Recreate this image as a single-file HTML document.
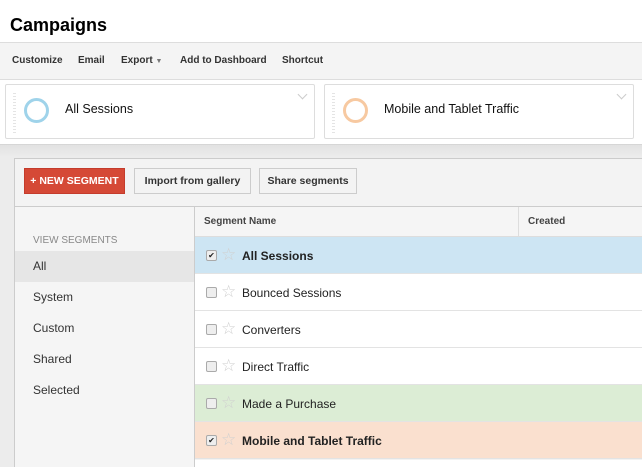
<!DOCTYPE html><html><head><style>
*{box-sizing:border-box;margin:0;padding:0}
body{width:642px;height:467px;overflow:hidden;background:#fff;font-family:"Liberation Sans",sans-serif;position:relative;color:#222}
.a{position:absolute}
.tb span{position:absolute;top:12px;font-size:10px;font-weight:bold;color:#333}
.card{position:absolute;top:84px;height:55px;background:#fff;border:1px solid #ddd;border-radius:2px}
.dots{position:absolute;left:7px;top:8px;width:3px;height:40px;background:repeating-linear-gradient(#e4e4e4 0 1px,#fff 1px 3px)}
.ring{position:absolute;left:18px;top:13px;width:25px;height:25px;border-radius:50%;border:3px solid}
.card .t{position:absolute;left:59px;top:17px;font-size:12.5px;color:#111}
.chev{position:absolute;right:8px;top:6px;width:7px;height:7px;border-right:1px solid #ccc;border-bottom:1px solid #ccc;transform:rotate(45deg)}
.btn{position:absolute;top:168px;height:26px;border:1px solid #ccc;background:#f3f3f3;font-size:10.5px;font-weight:bold;color:#333;line-height:24px;text-align:center}
.nav{position:absolute;left:33px;font-size:12px;color:#333}
.row{position:absolute;left:195px;width:447px;height:37px;border-bottom:1px solid #e3e3e3;font-size:12px;color:#222}
.row .cb{position:absolute;left:11px;top:13px;width:11px;height:11px;border:1px solid #aaa;border-radius:2px;background:#eee;font-size:8px;line-height:9px;text-align:center}
.row .st{position:absolute;left:26px;top:10px;font-size:17px;color:#d0d0d0;line-height:16px}
.row .n{position:absolute;left:47px;top:12px}
</style></head><body>
<div class="a" style="left:10px;top:15px;font-size:18px;font-weight:bold;color:#000">Campaigns</div>
<div class="a tb" style="left:0;top:42px;width:642px;height:38px;background:#f4f4f4;border-top:1px solid #ddd;border-bottom:1px solid #ddd">
<span style="left:12px">Customize</span><span style="left:78px">Email</span><span style="left:121px">Export <span style="position:static;font-size:7px;color:#777">▼</span></span><span style="left:180px">Add to Dashboard</span><span style="left:282px">Shortcut</span></div>
<div class="card" style="left:5px;width:310px"><div class="dots"></div><div class="ring" style="border-color:#9fd3ea"></div><div class="t">All Sessions</div><div class="chev"></div></div>
<div class="card" style="left:324px;width:310px"><div class="dots"></div><div class="ring" style="border-color:#f7c9a1"></div><div class="t">Mobile and Tablet Traffic</div><div class="chev"></div></div>
<div class="a" style="left:0;top:144px;width:642px;height:323px;background:linear-gradient(#e2e2e2,#ececec 12px,#ececec);border-top:1px solid #d6d6d6"></div>
<div class="a" style="left:14px;top:158px;width:628px;height:309px;background:#f3f3f3;border:1px solid #ccc;border-right:none"></div>
<div class="btn" style="left:24px;width:101px;background:#d54936;border-color:#c43c2c;color:#fff">+ NEW SEGMENT</div>
<div class="btn" style="left:134px;width:117px">Import from gallery</div>
<div class="btn" style="left:259px;width:98px">Share segments</div>
<div class="a" style="left:15px;top:206px;width:627px;height:1px;background:#ccc"></div>
<div class="a" style="left:15px;top:207px;width:180px;height:260px;background:#f5f5f5"></div>
<div class="a" style="left:194px;top:207px;width:1px;height:260px;background:#ccc"></div>
<div class="a" style="left:195px;top:207px;width:447px;height:30px;background:#f5f5f5;border-bottom:1px solid #ddd;font-size:10px;font-weight:bold;color:#444"><span style="position:absolute;left:9px;top:9px">Segment Name</span><span style="position:absolute;left:323px;top:0;width:1px;height:29px;background:#ddd"></span><span style="position:absolute;left:333px;top:9px">Created</span></div>
<div class="a" style="left:33px;top:235px;font-size:10px;color:#888">VIEW SEGMENTS</div>
<div class="a" style="left:15px;top:251px;width:179px;height:31px;background:#e6e6e6"></div>
<div class="nav" style="top:259px">All</div>
<div class="nav" style="top:290px">System</div>
<div class="nav" style="top:321px">Custom</div>
<div class="nav" style="top:352px">Shared</div>
<div class="nav" style="top:383px">Selected</div>
<div class="row" style="top:237px;background:#cde5f3"><div class="cb">✔</div><div class="st">☆</div><div class="n" style="font-weight:bold">All Sessions</div></div>
<div class="row" style="top:274px;background:#fff"><div class="cb"></div><div class="st">☆</div><div class="n">Bounced Sessions</div></div>
<div class="row" style="top:311px;background:#fff"><div class="cb"></div><div class="st">☆</div><div class="n">Converters</div></div>
<div class="row" style="top:348px;background:#fff"><div class="cb"></div><div class="st">☆</div><div class="n">Direct Traffic</div></div>
<div class="row" style="top:385px;background:#dcedd5"><div class="cb"></div><div class="st">☆</div><div class="n">Made a Purchase</div></div>
<div class="row" style="top:422px;background:#fae0cf"><div class="cb">✔</div><div class="st">☆</div><div class="n" style="font-weight:bold">Mobile and Tablet Traffic</div></div>
<div class="a" style="left:195px;top:460px;width:447px;height:7px;background:#fff"></div>
</body></html>
